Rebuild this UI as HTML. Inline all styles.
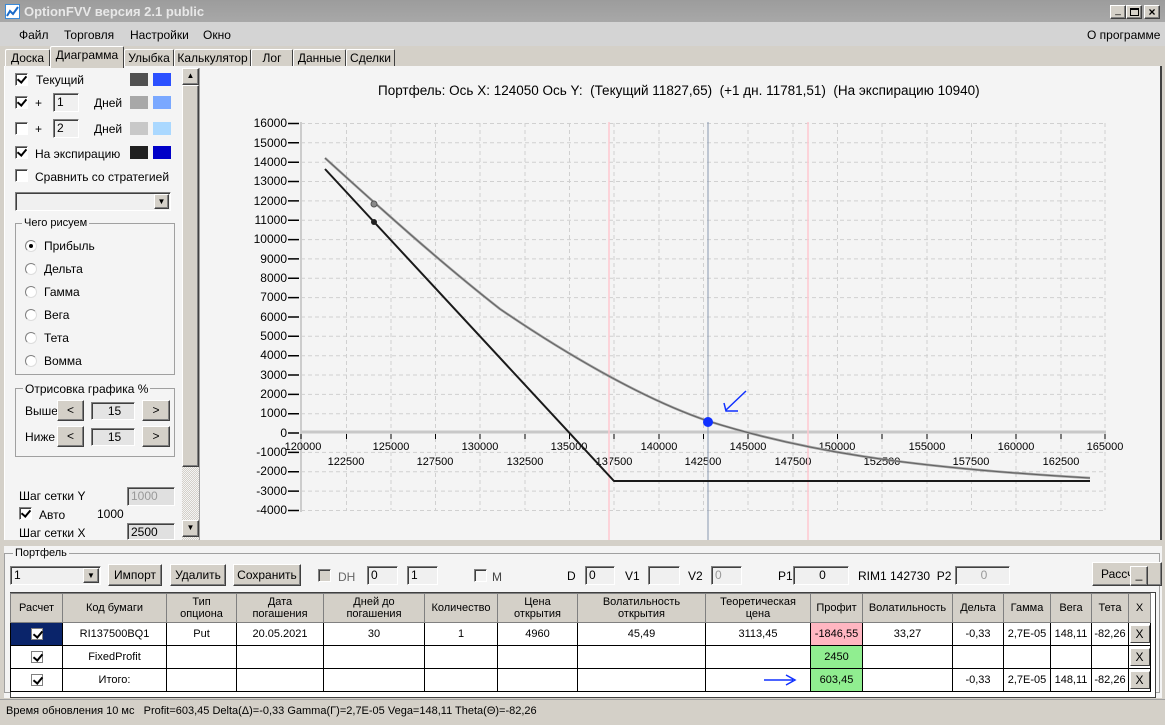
<!DOCTYPE html>
<html><head><meta charset="utf-8">
<style>
*{box-sizing:border-box;margin:0;padding:0}
body{width:1165px;height:725px;overflow:hidden;background:#d4d0c8;font-family:"Liberation Sans",sans-serif;font-size:11px;color:#000;position:relative}
.a{position:absolute}
.t{position:absolute;white-space:nowrap;line-height:1}
.cb{position:absolute;width:13px;height:13px;background:#fff;border:1px solid #808080;border-right-color:#fff;border-bottom-color:#fff;box-shadow:inset 1px 1px 0 #404040}
.on::after{content:"";position:absolute;left:3px;top:0px;width:4px;height:7px;border:solid #000;border-width:0 2px 2px 0;transform:rotate(40deg)}
.tc{display:inline-block;position:relative;width:12px;height:12px;background:#fff;border:1px solid #808080;vertical-align:middle}
.sw{position:absolute;width:18px;height:13px}
.in{position:absolute;background:#f0f0f0;border:1px solid #808080;border-right-color:#fff;border-bottom-color:#fff;box-shadow:inset 1px 1px 0 #404040;font-size:12px;padding-left:3px;line-height:16px}
.btn{position:absolute;background:#d4d0c8;border:1px solid #fff;border-right-color:#404040;border-bottom-color:#404040;box-shadow:inset -1px -1px 0 #808080;text-align:center;font-size:12px}
.rd{position:absolute;width:12px;height:12px;border-radius:50%;background:#fff;border:1px solid #808080;border-right-color:#ddd;border-bottom-color:#ddd}
.tab{position:absolute;top:49px;height:18px;background:#d4d0c8;border:1px solid #fff;border-right-color:#404040;border-bottom:none;font-size:12px;text-align:center;line-height:16px;border-radius:2px 2px 0 0}
table{border-collapse:collapse;position:absolute;left:10px;top:593px;font-size:11px}
td{border:1px solid #000;text-align:center;height:23px;padding:0;white-space:nowrap}
tr.h td{background:#d4d0c8;height:29px;border-color:#808080;line-height:12px}
.x{background:#d4d0c8;border:1px solid #fff;border-right-color:#404040;border-bottom-color:#404040;width:20px;height:18px;margin:auto;line-height:16px;font-size:12px}
.lp .t{font-size:12px}
</style></head><body>
<div class="a" style="left:0;top:0;width:1165px;height:22px;background:linear-gradient(#9c9c9c,#a8a8a8)"></div>
<div class="a" style="left:5px;top:4px;width:15px;height:15px;background:#fff;border:1px solid #3a8ad8"><svg width="13" height="13"><path d="M1 11 L4 6 L7 9 L12 2" stroke="#1a6ac8" stroke-width="2" fill="none"/></svg></div>
<div class="t" style="left:24px;top:5px;font-size:13px;font-weight:bold;color:#e8e8e8">OptionFVV версия 2.1 public</div>
<div class="btn" style="left:1110px;top:5px;width:16px;height:14px;font-size:10px;line-height:10px">_</div>
<div class="btn" style="left:1126px;top:5px;width:16px;height:14px"><div class="a" style="left:3px;top:2px;width:9px;height:8px;border:1px solid #000;border-top-width:2px"></div></div>
<div class="btn" style="left:1144px;top:5px;width:16px;height:14px;font-size:12px;line-height:12px;font-weight:bold">×</div>
<div class="a" style="left:0;top:22px;width:1165px;height:24px;background:#d4d4d4"></div>
<div class="t" style="left:19px;top:29px;font-size:12px">Файл</div>
<div class="t" style="left:64px;top:29px;font-size:12px">Торговля</div>
<div class="t" style="left:130px;top:29px;font-size:12px">Настройки</div>
<div class="t" style="left:203px;top:29px;font-size:12px">Окно</div>
<div class="t" style="left:1087px;top:29px;font-size:12px">О программе</div>
<div class="tab" style="left:5px;width:45px">Доска</div>
<div class="tab" style="left:50px;top:46px;width:74px;height:22px;z-index:2">Диаграмма</div>
<div class="tab" style="left:124px;width:50px">Улыбка</div>
<div class="tab" style="left:174px;width:77px">Калькулятор</div>
<div class="tab" style="left:251px;width:42px">Лог</div>
<div class="tab" style="left:293px;width:53px">Данные</div>
<div class="tab" style="left:346px;width:49px">Сделки</div>
<div class="a" style="left:4px;top:66px;width:1158px;height:474px;background:#f4f4f4;border-left:1px solid #fff;border-right:2px solid #404040"></div>
<div class="lp">
<div class="cb on" style="left:15px;top:73px"></div><div class="t" style="left:36px;top:74px">Текущий</div>
<div class="sw" style="left:130px;top:73px;background:#505050"></div><div class="sw" style="left:153px;top:73px;background:#2b50ff"></div>
<div class="cb on" style="left:15px;top:96px"></div><div class="t" style="left:35px;top:97px">+</div>
<div class="in" style="left:53px;top:93px;width:26px;height:19px">1</div><div class="t" style="left:94px;top:97px">Дней</div>
<div class="sw" style="left:130px;top:96px;background:#a8a8a8"></div><div class="sw" style="left:153px;top:96px;background:#7aa8ff"></div>
<div class="cb" style="left:15px;top:122px"></div><div class="t" style="left:35px;top:123px">+</div>
<div class="in" style="left:53px;top:119px;width:26px;height:19px">2</div><div class="t" style="left:94px;top:123px">Дней</div>
<div class="sw" style="left:130px;top:122px;background:#c8c8c8"></div><div class="sw" style="left:153px;top:122px;background:#aad8ff"></div>
<div class="cb on" style="left:15px;top:146px"></div><div class="t" style="left:35px;top:148px">На экспирацию</div>
<div class="sw" style="left:130px;top:146px;background:#202020"></div><div class="sw" style="left:153px;top:146px;background:#0000c8"></div>
<div class="cb" style="left:15px;top:169px"></div><div class="t" style="left:35px;top:171px">Сравнить со стратегией</div>
<div class="in" style="left:15px;top:192px;width:156px;height:19px"></div>
<div class="btn" style="left:154px;top:194px;width:15px;height:15px;font-size:8px;line-height:13px">▼</div>
<div class="a" style="left:15px;top:223px;width:160px;height:152px;border:1px solid #a0a0a0"></div>
<div class="t" style="left:22px;top:218px;background:#f4f4f4;padding:0 2px;font-size:11px!important">Чего рисуем</div>
<div class="rd" style="left:25px;top:240px"><div class="a" style="left:3px;top:3px;width:4px;height:4px;border-radius:50%;background:#000"></div></div><div class="t" style="left:44px;top:240px">Прибыль</div>
<div class="rd" style="left:25px;top:263px"></div><div class="t" style="left:44px;top:263px">Дельта</div>
<div class="rd" style="left:25px;top:286px"></div><div class="t" style="left:44px;top:286px">Гамма</div>
<div class="rd" style="left:25px;top:309px"></div><div class="t" style="left:44px;top:309px">Вега</div>
<div class="rd" style="left:25px;top:332px"></div><div class="t" style="left:44px;top:332px">Тета</div>
<div class="rd" style="left:25px;top:355px"></div><div class="t" style="left:44px;top:355px">Вомма</div>
<div class="a" style="left:15px;top:388px;width:160px;height:69px;border:1px solid #a0a0a0"></div>
<div class="t" style="left:23px;top:383px;background:#f4f4f4;padding:0 2px">Отрисовка графика %</div>
<div class="t" style="left:25px;top:405px">Выше</div>
<div class="btn" style="left:57px;top:400px;width:27px;height:21px;line-height:19px">&lt;</div>
<div class="in" style="left:91px;top:402px;width:44px;height:18px;text-align:center;background:#e4e4e4">15</div>
<div class="btn" style="left:142px;top:400px;width:28px;height:21px;line-height:19px">&gt;</div>
<div class="t" style="left:25px;top:431px">Ниже</div>
<div class="btn" style="left:57px;top:426px;width:27px;height:21px;line-height:19px">&lt;</div>
<div class="in" style="left:91px;top:428px;width:44px;height:18px;text-align:center;background:#e4e4e4">15</div>
<div class="btn" style="left:142px;top:426px;width:28px;height:21px;line-height:19px">&gt;</div>
<div class="t" style="left:19px;top:490px">Шаг сетки Y</div>
<div class="in" style="left:127px;top:487px;width:48px;height:19px;color:#999;background:#e0e0e0">1000</div>
<div class="cb on" style="left:19px;top:507px"></div><div class="t" style="left:39px;top:509px">Авто</div><div class="t" style="left:97px;top:508px">1000</div>
<div class="t" style="left:19px;top:527px;height:11px;overflow:hidden">Шаг сетки Х</div>
<div class="in" style="left:127px;top:523px;width:48px;height:17px;background:#e0e0e0">2500</div>
</div>
<div class="a" style="left:182px;top:68px;width:17px;height:472px;background:repeating-conic-gradient(#d4d0c8 0 25%,#f4f4f4 0 50%) 0 0/2px 2px"></div>
<div class="btn" style="left:182px;top:68px;width:17px;height:17px;font-size:8px;line-height:14px">▲</div>
<div class="btn" style="left:182px;top:85px;width:17px;height:382px"></div>
<div class="btn" style="left:182px;top:520px;width:17px;height:17px;font-size:8px;line-height:14px">▼</div>
<div class="a" style="left:199px;top:68px;width:1px;height:472px;background:#a0a0a0"></div>
<div class="t" style="left:378px;top:84px;font-size:13.5px">Портфель: Ось X: 124050 Ось Y:&nbsp; (Текущий 11827,65)&nbsp; (+1 дн. 11781,51)&nbsp; (На экспирацию 10940)</div>
<svg class="a" style="left:0;top:0" width="1165" height="725" font-family="Liberation Sans,sans-serif" font-size="12">
<g stroke="#d0d0d0" stroke-dasharray="4 3" stroke-width="1">
<path d="M301 123.5H1105M301 142.8H1105M301 162.2H1105M301 181.5H1105M301 200.9H1105M301 220.2H1105M301 239.6H1105M301 258.9H1105M301 278.3H1105M301 297.6H1105M301 317H1105M301 336.3H1105M301 355.7H1105M301 375H1105M301 394.4H1105M301 413.7H1105M301 452.4H1105M301 471.8H1105M301 491.1H1105M301 510.5H1105"/>
<path d="M346.5 123V510M391 123V510M435.5 123V510M480 123V510M525 123V510M569.5 123V510M614 123V510M659 123V510M703.5 123V510M748 123V510M793 123V510M837.5 123V510M882 123V510M927 123V510M971.5 123V510M1016 123V510M1061 123V510M1105 123V510"/>
</g>
<path d="M301 122V512" stroke="#ccc" stroke-width="2"/>
<path d="M301 432H1106" stroke="#c8c8c8" stroke-width="3"/>
<g stroke="#000" stroke-width="1.5">
<path d="M288 123.5h11M288 142.8h11M288 162.2h11M288 181.5h11M288 200.9h11M288 220.2h11M288 239.6h11M288 258.9h11M288 278.3h11M288 297.6h11M288 317h11M288 336.3h11M288 355.7h11M288 375h11M288 394.4h11M288 413.7h11M288 433h11M288 452.4h11M288 471.8h11M288 491.1h11M288 510.5h11"/>
</g>
<g stroke="#000" stroke-width="1"><path d="M346.5 434v5M391 434v5M435.5 434v5M480 434v5M525 434v5M569.5 434v5M614 434v5M659 434v5M703.5 434v5M748 434v5M793 434v5M837.5 434v5M882 434v5M927 434v5M971.5 434v5M1016 434v5M1061 434v5M1105 434v5M301 434v5"/></g>
<g text-anchor="end" fill="#000">
<text x="287" y="127">16000</text><text x="287" y="147">15000</text><text x="287" y="166">14000</text><text x="287" y="185">13000</text><text x="287" y="205">12000</text><text x="287" y="224">11000</text><text x="287" y="243">10000</text><text x="287" y="263">9000</text><text x="287" y="282">8000</text><text x="287" y="301">7000</text><text x="287" y="321">6000</text><text x="287" y="340">5000</text><text x="287" y="359">4000</text><text x="287" y="379">3000</text><text x="287" y="398">2000</text><text x="287" y="417">1000</text><text x="287" y="437">0</text><text x="287" y="456">-1000</text><text x="287" y="475">-2000</text><text x="287" y="495">-3000</text><text x="287" y="514">-4000</text>
</g>
<g text-anchor="middle" font-size="11">
<text x="303" y="450">120000</text><text x="391" y="450">125000</text><text x="480" y="450">130000</text><text x="569" y="450">135000</text><text x="659" y="450">140000</text><text x="748" y="450">145000</text><text x="837" y="450">150000</text><text x="927" y="450">155000</text><text x="1016" y="450">160000</text><text x="1105" y="450">165000</text>
<text x="346" y="465">122500</text><text x="435" y="465">127500</text><text x="525" y="465">132500</text><text x="614" y="465">137500</text><text x="703" y="465">142500</text><text x="793" y="465">147500</text><text x="882" y="465">152500</text><text x="971" y="465">157500</text><text x="1061" y="465">162500</text>
</g>
<path d="M609 122V540M808 122V540" stroke="#ffc8d0" stroke-width="1.5"/>
<path d="M708 122V540" stroke="#8898b0" stroke-width="1"/>
<path d="M325 169L614 481L1090 481" stroke="#1a1a1a" stroke-width="2" fill="none"/>
<path d="M325 158C380 208 440 262 500 309C560 350 640 398 708 421C800 450 900 467 1090 478" stroke="#a0a0a0" stroke-width="2.5" fill="none"/>
<path d="M325 158C380 208 440 262 500 309C560 350 640 398 708 421C800 450 900 467 1090 478" stroke="#606060" stroke-width="1" fill="none"/>
<circle cx="374" cy="204" r="3" fill="#888" stroke="#555"/>
<circle cx="374" cy="222" r="3" fill="#222"/>
<circle cx="708" cy="422" r="5" fill="#1030ff"/>
<path d="M746 391L726 410M724 403L726 411L738 411" stroke="#1030ff" stroke-width="1.5" fill="none"/>
</svg>
<div class="a" style="left:4px;top:546px;width:1158px;height:152px;background:#f4f4f4"></div>
<div class="a" style="left:4px;top:553px;width:1156px;height:140px;border:1px solid #a0a0a0"></div>
<div class="t" style="left:13px;top:548px;background:#f4f4f4;padding:0 2px">Портфель</div>
<div class="in" style="left:10px;top:566px;width:91px;height:19px">1</div>
<div class="btn" style="left:83px;top:568px;width:16px;height:15px;font-size:8px;line-height:13px">▼</div>
<div class="btn" style="left:108px;top:564px;width:54px;height:22px;line-height:20px">Импорт</div>
<div class="btn" style="left:170px;top:564px;width:56px;height:22px;line-height:20px">Удалить</div>
<div class="btn" style="left:233px;top:564px;width:68px;height:22px;line-height:20px">Сохранить</div>
<div class="cb" style="left:318px;top:569px;background:#d4d0c8"></div><div class="t" style="left:338px;top:571px;color:#666;font-size:12px">DH</div>
<div class="in" style="left:367px;top:566px;width:31px;height:19px">0</div>
<div class="in" style="left:407px;top:566px;width:31px;height:19px">1</div>
<div class="cb" style="left:474px;top:569px;background:#f4f4f4"></div><div class="t" style="left:492px;top:571px;color:#444;font-size:12px">M</div>
<div class="t" style="left:567px;top:570px;font-size:12px">D</div><div class="in" style="left:585px;top:566px;width:30px;height:19px">0</div>
<div class="t" style="left:625px;top:570px;font-size:12px">V1</div><div class="in" style="left:648px;top:566px;width:32px;height:19px"></div>
<div class="t" style="left:688px;top:570px;font-size:12px">V2</div><div class="in" style="left:711px;top:566px;width:31px;height:19px;color:#999">0</div>
<div class="t" style="left:778px;top:570px;font-size:12px">P1</div><div class="in" style="left:793px;top:566px;width:56px;height:19px;text-align:center">0</div>
<div class="t" style="left:858px;top:570px;font-size:12px">RIM1 142730&nbsp; P2</div><div class="in" style="left:955px;top:566px;width:55px;height:19px;text-align:center;color:#999">0</div>
<div class="btn" style="left:1092px;top:562px;width:70px;height:24px;line-height:22px;text-align:left;padding-left:8px">Рассч</div>
<div class="btn" style="left:1130px;top:566px;width:18px;height:20px">_</div>
<div class="a" style="left:10px;top:592px;width:1146px;height:106px;background:#fff;border:1px solid #404040"></div>
<table>
<colgroup><col style="width:52px"><col style="width:104px"><col style="width:70px"><col style="width:87px"><col style="width:101px"><col style="width:73px"><col style="width:80px"><col style="width:128px"><col style="width:105px"><col style="width:52px"><col style="width:90px"><col style="width:51px"><col style="width:47px"><col style="width:41px"><col style="width:37px"><col style="width:22px"></colgroup>
<tr class="h"><td>Расчет</td><td>Код бумаги</td><td>Тип<br>опциона</td><td>Дата<br>погашения</td><td>Дней до<br>погашения</td><td>Количество</td><td>Цена<br>открытия</td><td>Волатильность<br>открытия</td><td>Теоретическая<br>цена</td><td>Профит</td><td>Волатильность</td><td>Дельта</td><td>Гамма</td><td>Вега</td><td>Тета</td><td>X</td></tr>
<tr><td style="background:#0a246a"><span class="tc on"></span></td><td>RI137500BQ1</td><td>Put</td><td>20.05.2021</td><td>30</td><td>1</td><td>4960</td><td>45,49</td><td>3113,45</td><td style="background:#ffb6c1">-1846,55</td><td>33,27</td><td>-0,33</td><td>2,7E-05</td><td>148,11</td><td>-82,26</td><td><div class="x">X</div></td></tr>
<tr><td><span class="tc on"></span></td><td>FixedProfit</td><td></td><td></td><td></td><td></td><td></td><td></td><td></td><td style="background:#90ee90">2450</td><td></td><td></td><td></td><td></td><td></td><td><div class="x">X</div></td></tr>
<tr><td><span class="tc on"></span></td><td>Итого:</td><td></td><td></td><td></td><td></td><td></td><td></td><td></td><td style="background:#90ee90">603,45</td><td></td><td>-0,33</td><td>2,7E-05</td><td>148,11</td><td>-82,26</td><td><div class="x">X</div></td></tr>
</table>
<svg class="a" style="left:0;top:0" width="1165" height="725"><path d="M764 680H793M786 675L795 680L786 685" stroke="#1030ff" stroke-width="1.5" fill="none"/></svg>
<div class="a" style="left:0;top:699px;width:1165px;height:26px;background:#d4d0c8;border-top:1px solid #a0a0a0"></div>
<div class="t" style="left:6px;top:706px;font-size:11px">Время обновления 10 мс&nbsp;&nbsp; Profit=603,45 Delta(Δ)=-0,33 Gamma(Γ)=2,7E-05 Vega=148,11 Theta(Θ)=-82,26</div>
</body></html>
